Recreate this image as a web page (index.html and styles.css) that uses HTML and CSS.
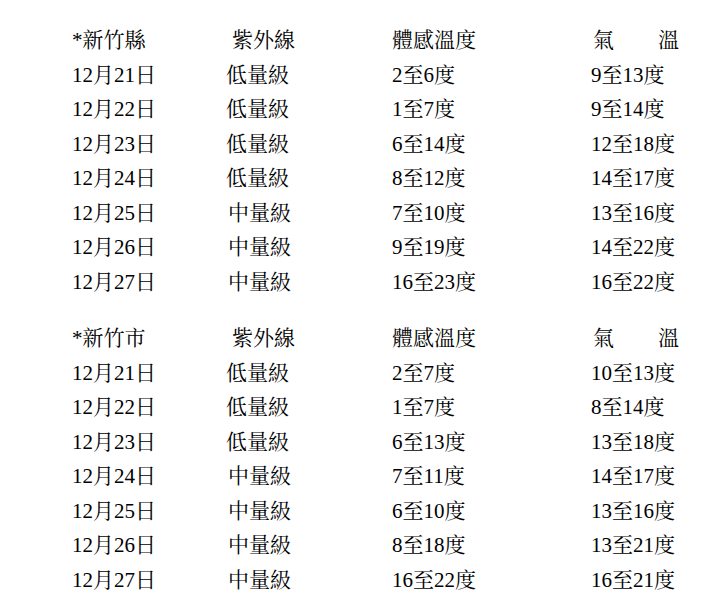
FILE: index.html
```html
<!DOCTYPE html>
<html lang="zh-Hant">
<head>
<meta charset="utf-8">
<link rel="stylesheet" href="styles.css">
</head>
<body>
<div class="page">
  <div class="sheet">
    <span class="c1">*新竹縣</span><span class="c2 hd">紫外線</span><span class="c3">體感溫度</span><span class="c4 air"><span>氣</span><span>溫</span></span>
    <span class="c1">12月21日</span><span class="c2">低量級</span><span class="c3">2至6度</span><span class="c4">9至13度</span>
    <span class="c1">12月22日</span><span class="c2">低量級</span><span class="c3">1至7度</span><span class="c4">9至14度</span>
    <span class="c1">12月23日</span><span class="c2">低量級</span><span class="c3">6至14度</span><span class="c4">12至18度</span>
    <span class="c1">12月24日</span><span class="c2">低量級</span><span class="c3">8至12度</span><span class="c4">14至17度</span>
    <span class="c1">12月25日</span><span class="c2 mid">中量級</span><span class="c3">7至10度</span><span class="c4">13至16度</span>
    <span class="c1">12月26日</span><span class="c2 mid">中量級</span><span class="c3">9至19度</span><span class="c4">14至22度</span>
    <span class="c1">12月27日</span><span class="c2 mid">中量級</span><span class="c3">16至23度</span><span class="c4">16至22度</span>
  </div>
  <div class="sheet second">
    <span class="c1">*新竹市</span><span class="c2 hd">紫外線</span><span class="c3">體感溫度</span><span class="c4 air"><span>氣</span><span>溫</span></span>
    <span class="c1">12月21日</span><span class="c2">低量級</span><span class="c3">2至7度</span><span class="c4">10至13度</span>
    <span class="c1">12月22日</span><span class="c2">低量級</span><span class="c3">1至7度</span><span class="c4">8至14度</span>
    <span class="c1">12月23日</span><span class="c2">低量級</span><span class="c3">6至13度</span><span class="c4">13至18度</span>
    <span class="c1">12月24日</span><span class="c2 mid">中量級</span><span class="c3">7至11度</span><span class="c4">14至17度</span>
    <span class="c1">12月25日</span><span class="c2 mid">中量級</span><span class="c3">6至10度</span><span class="c4">13至16度</span>
    <span class="c1">12月26日</span><span class="c2 mid">中量級</span><span class="c3">8至18度</span><span class="c4">13至21度</span>
    <span class="c1">12月27日</span><span class="c2 mid">中量級</span><span class="c3">16至22度</span><span class="c4">16至21度</span>
  </div>
</div>
</body>
</html>
```

FILE: styles.css
```css
html, body {
  margin: 0;
  padding: 0;
  background: #ffffff;
}

body {
  color: #000000;
  font-family: "Liberation Serif", "Noto Serif CJK TC", "Noto Sans CJK TC", serif;
  font-size: 21px;
}

.page {
  padding: 21px 0 0 72px;
}

.sheet {
  display: grid;
  grid-template-columns: 154px 166px 199px 100px;
  grid-auto-rows: 34.5px;
  align-items: center;
  white-space: nowrap;
}

.second {
  margin-top: 22px;
}

.c2.hd {
  padding-left: 6px;
}

.c2.mid {
  padding-left: 2px;
}

.air {
  display: flex;
  justify-content: space-between;
  width: 86px;
  padding-left: 2px;
}
```
